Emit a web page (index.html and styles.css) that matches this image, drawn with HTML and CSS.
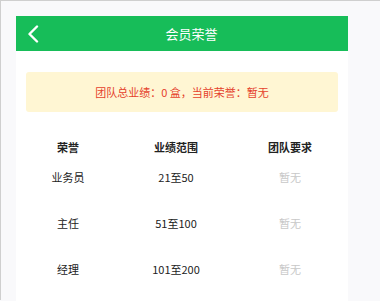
FILE: index.html
```html
<!DOCTYPE html>
<html lang="zh-CN">
<head>
    <meta charset="UTF-8">
    <meta name="viewport" content="width=device-width, initial-scale=1.0">
    <title>会员荣誉</title>
    <link rel="stylesheet" href="styles.css">
</head>
<body>
    <div class="page">
        <div class="panel">
            <div class="header">
                <a class="back" href="#">
                    <svg width="12" height="18" viewBox="0 0 12 18">
                        <polyline points="10,1.5 2.5,9 10,16.5" fill="none" stroke="#fff" stroke-width="2.4" stroke-linecap="round" stroke-linejoin="round"/>
                    </svg>
                </a>
                <h1>会员荣誉</h1>
            </div>

            <div class="notice">团队总业绩：0 盒，当前荣誉：暂无</div>

            <div class="table">
                <div class="row head">
                    <span>荣誉</span>
                    <span>业绩范围</span>
                    <span>团队要求</span>
                </div>
                <div class="rows">
                    <div class="row">
                        <span>业务员</span>
                        <span>21至50</span>
                        <span class="none">暂无</span>
                    </div>
                    <div class="row">
                        <span>主任</span>
                        <span>51至100</span>
                        <span class="none">暂无</span>
                    </div>
                    <div class="row">
                        <span>经理</span>
                        <span>101至200</span>
                        <span class="none">暂无</span>
                    </div>
                </div>
            </div>
        </div>
    </div>
</body>
</html>
```

FILE: styles.css
```css
body {
    font-family: "Noto Sans CJK SC", "Liberation Sans", sans-serif;
    background-color: #f9f9fb;
    margin: 0;
    height: 301px;
    overflow: hidden;
}

.page {
    border-top: 1px solid #cfcfcf;
    border-left: 1px solid #cfcfcf;
    height: 300px;
    padding: 15px 0 0 15px;
    box-sizing: border-box;
}

.panel {
    background-color: #fff;
    width: 332px;
    height: 285px;
}

.header {
    background-color: #17bd59;
    height: 35px;
    display: flex;
    align-items: center;
    position: relative;
}

.back {
    display: flex;
    margin-left: 11px;
}

.header h1 {
    flex: 1;
    margin: 0 0 0 -4px;
    text-align: center;
    color: #fff;
    font-size: 13px;
    font-weight: normal;
}

.notice {
    margin: 21px 10px 0;
    height: 40px;
    line-height: 40px;
    background-color: #fff6d3;
    border-radius: 3px;
    text-align: center;
    color: #e5412b;
    font-size: 11px;
}

.table {
    margin: 20px 10px 0;
    font-size: 11px;
    color: #222;
}

.rows {
    display: flex;
    flex-direction: column;
    gap: 16px;
}

.row {
    display: grid;
    grid-template-columns: 84px 132px 96px;
    height: 30px;
    align-items: center;
    text-align: center;
}

.row.head {
    font-weight: bold;
}

.none {
    color: #c8c8c8;
}
```
